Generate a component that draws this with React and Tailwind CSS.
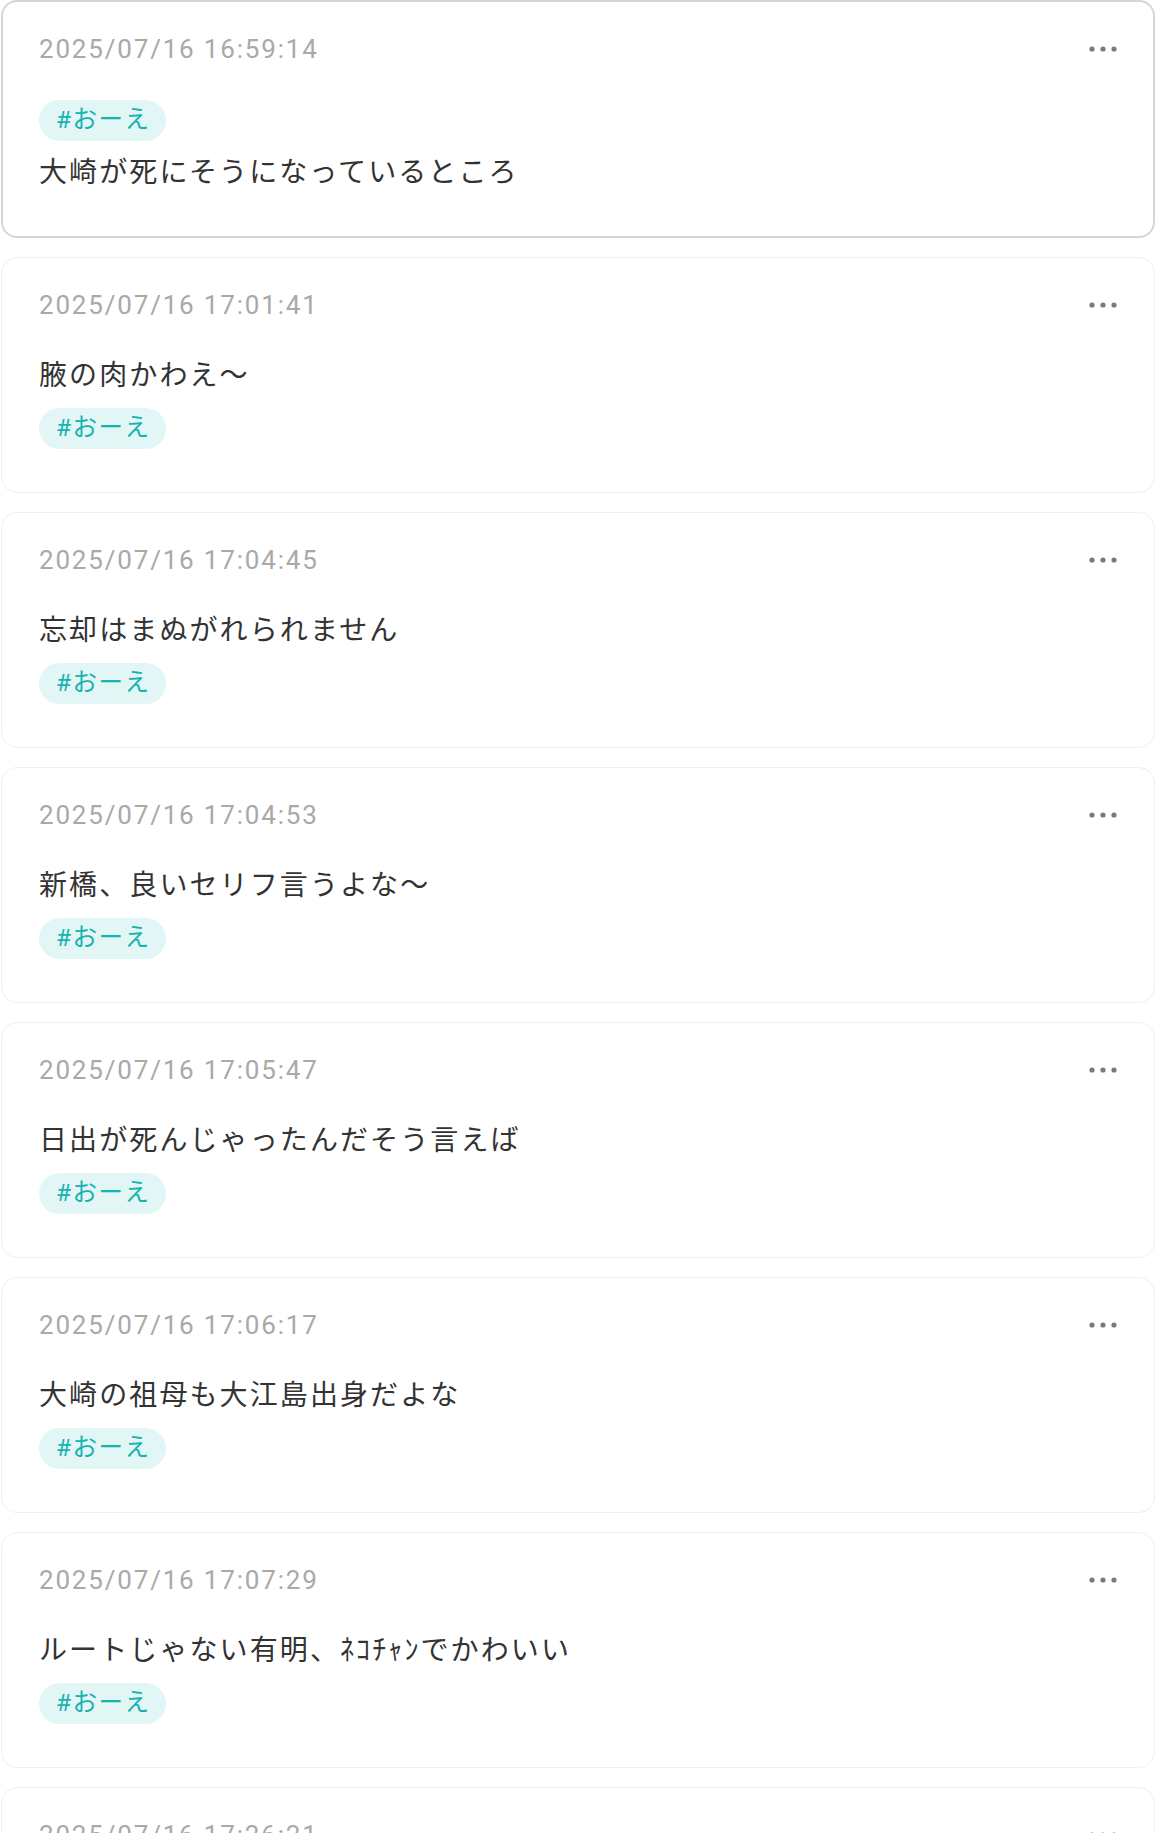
import React from 'react';

const posts = [
    { id: 1, date: '2025/07/16 16:59:14', text: '大崎が死にそうになっているところ', tag: '#おーえ', tagFirst: true, active: true },
    { id: 2, date: '2025/07/16 17:01:41', text: '腋の肉かわえ〜', tag: '#おーえ' },
    { id: 3, date: '2025/07/16 17:04:45', text: '忘却はまぬがれられません', tag: '#おーえ' },
    { id: 4, date: '2025/07/16 17:04:53', text: '新橋、良いセリフ言うよな〜', tag: '#おーえ' },
    { id: 5, date: '2025/07/16 17:05:47', text: '日出が死んじゃったんだそう言えば', tag: '#おーえ' },
    { id: 6, date: '2025/07/16 17:06:17', text: '大崎の祖母も大江島出身だよな', tag: '#おーえ' },
    { id: 7, date: '2025/07/16 17:07:29', text: 'ルートじゃない有明、ﾈｺﾁｬﾝでかわいい', tag: '#おーえ' },
    { id: 8, date: '2025/07/16 17:26:21', text: '', tag: '#おーえ' },
];

const font = "font-['Roboto','Noto_Sans_CJK_JP',sans-serif]";

const MoreButton = () => (
    <button className="flex h-9 w-12 items-center justify-center">
        <svg width="28" height="6" viewBox="0 0 28 6" fill="#7a7a7a">
            <circle cx="3" cy="3" r="2.6" />
            <circle cx="14" cy="3" r="2.6" />
            <circle cx="25" cy="3" r="2.6" />
        </svg>
    </button>
);

const Tag = ({ label }) => (
    <span className="inline-flex h-[41px] w-fit items-center rounded-full bg-[#e3f6f6] pl-[17px] pr-[16px] text-[24.5px] tracking-[0.06em] text-[#17b3b1]">
        {label}
    </span>
);

const PostCard = ({ post }) => {
    const body = <p className="text-[28px] leading-[40px] tracking-[0.075em] text-[#333333]">{post.text}</p>;
    return (
        <div
            className={
                post.active
                    ? 'rounded-2xl border-2 border-[#d6d6d6] bg-white pt-[29px] pb-[43px] pl-[36px] pr-[26px]'
                    : 'rounded-2xl border border-[#efefef] bg-white pt-[29px] pb-[43px] pl-[37px] pr-[27px]'
            }
        >
            <div className="flex h-9 items-center justify-between">
                <span className="text-[26px] leading-9 tracking-[0.07em] text-[#a9a9a9]">{post.date}</span>
                <MoreButton />
            </div>
            <div className="mt-[33px] flex flex-col gap-3">
                {post.tagFirst ? (
                    <>
                        <Tag label={post.tag} />
                        {body}
                    </>
                ) : (
                    <>
                        {body}
                        <Tag label={post.tag} />
                    </>
                )}
            </div>
        </div>
    );
};

export default function App() {
    return (
        <div className={`${font} flex min-h-screen flex-col gap-[19px] bg-white px-px`}>
            {posts.map((post) => (
                <PostCard key={post.id} post={post} />
            ))}
        </div>
    );
}
